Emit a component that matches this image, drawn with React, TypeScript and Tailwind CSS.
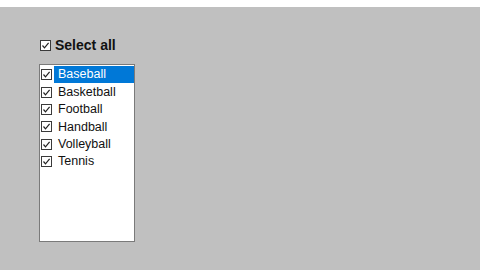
import React from "react";

function Check() {
  return (
    <svg width="11" height="11" viewBox="0 0 11 11" className="shrink-0">
      <rect x="0.5" y="0.5" width="10" height="10" fill="#ffffff" stroke="#3a3a3a" strokeWidth="1" />
      <path d="M2.5 5.5 L4.5 7.8 L8.6 2.8" fill="none" stroke="#222222" strokeWidth="1.2" />
    </svg>
  );
}

const items = ["Baseball", "Basketball", "Football", "Handball", "Volleyball", "Tennis"];

export default function App() {
  return (
    <div
      className="w-[480px] h-[270px] bg-[#c0c0c0] overflow-hidden flex flex-col"
      style={{ fontFamily: '"Liberation Sans", Arial, sans-serif' }}
    >
      <div className="h-[7px] bg-white shrink-0" />
      <div className="pl-[40px] pt-[32px] flex flex-col">
        <div className="flex items-center h-[12px] gap-[4px]">
          <Check />
          <span className="text-[14px] font-bold text-[#111111] leading-none">Select all</span>
        </div>
        <div className="mt-[13px] -ml-[1px] w-[96px] h-[178px] bg-white border border-[#7a7a7a] flex flex-col pt-[1px]">
          {items.map((it, i) => (
            <div key={it} className="flex items-center h-[17.4px] pl-[1px]">
              <Check />
              <div
                className={
                  i === 0
                    ? "ml-[2px] flex-1 h-full flex items-center bg-[#0078d7] text-white pl-[4px]"
                    : "ml-[2px] flex-1 h-full flex items-center text-[#111111] pl-[4px]"
                }
              >
                <span className="text-[12.5px] leading-none">{it}</span>
              </div>
            </div>
          ))}
        </div>
      </div>
    </div>
  );
}
